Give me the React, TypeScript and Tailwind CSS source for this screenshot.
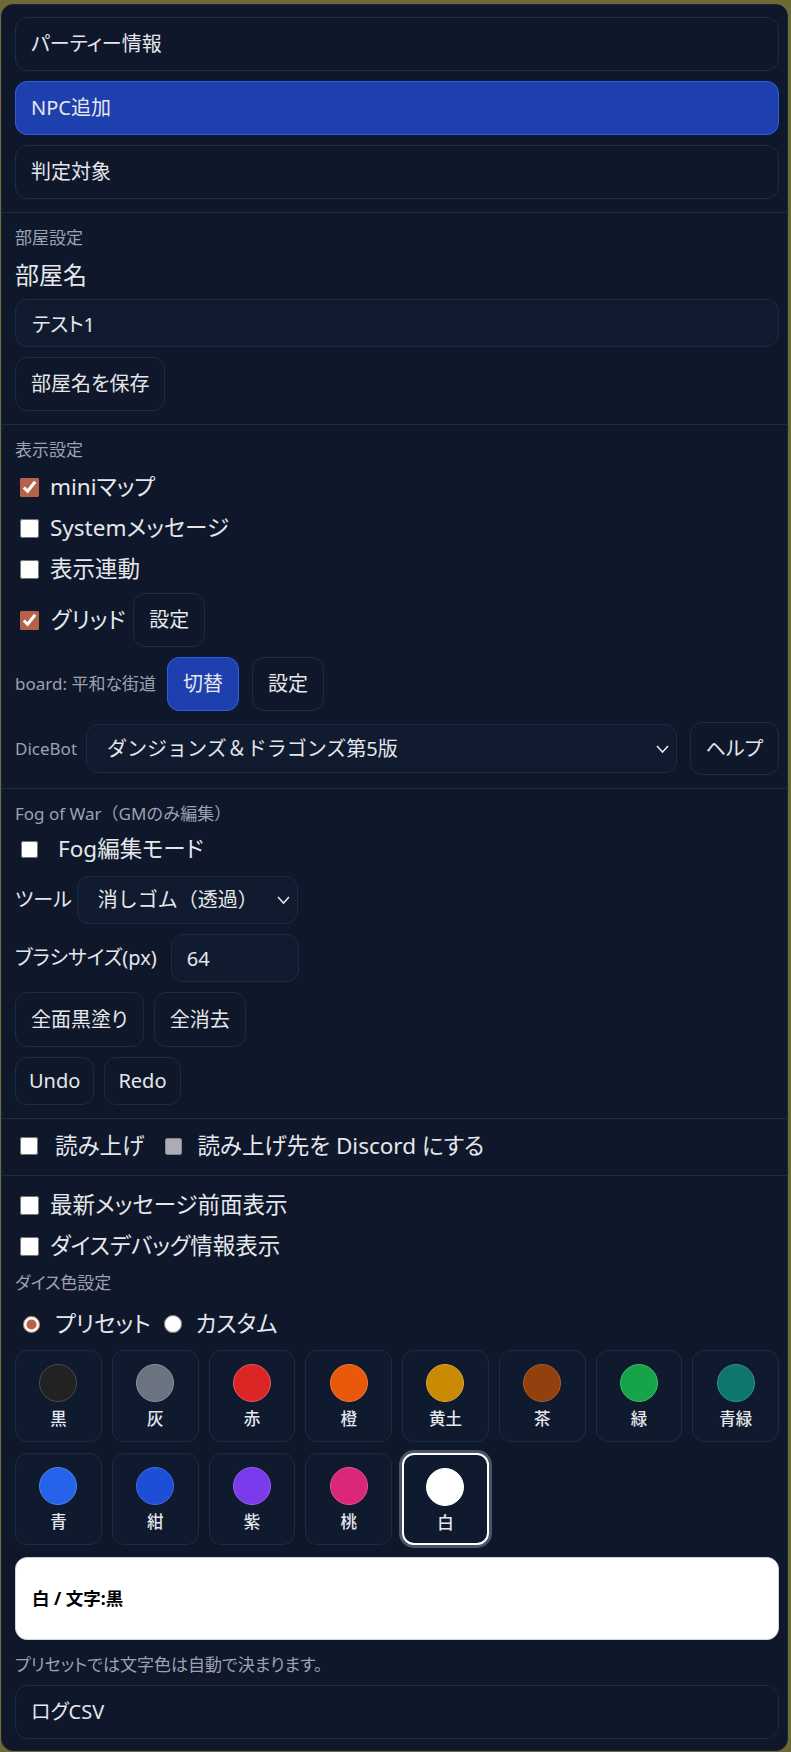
import React, { useState } from 'react';

const font = "font-['Noto_Sans','Noto_Sans_CJK_JP',sans-serif] [font-feature-settings:'palt']";
const border = 'border border-[#1e2b45]';
const btn = `rounded-xl ${border} bg-[#0f172a] px-[15px] text-[20px] text-[#e5e7eb] flex items-center shrink-0`;
const blueBtn = 'rounded-xl border border-[#2f5fe0] bg-[#1e40af] px-[15px] text-[20px] text-[#e5e7eb] flex items-center shrink-0';
const label = 'text-[17px] leading-[26px] text-[#9ca3af]';
const field = `rounded-xl ${border} bg-[#111b2f] text-[20px] text-[#e5e7eb] outline-none`;
const check = 'w-[19px] h-[19px] accent-[#b4634a] shrink-0';

const colors = [
  { name: '黒', c: '#222222', ring: '#4b4b4b' },
  { name: '灰', c: '#6b7280', ring: '#8b93a0' },
  { name: '赤', c: '#dc2626', ring: '#e85a5a' },
  { name: '橙', c: '#ea580c', ring: '#f07a3a' },
  { name: '黄土', c: '#ca8a04', ring: '#d9a23a' },
  { name: '茶', c: '#92400e', ring: '#aa5c2c' },
  { name: '緑', c: '#16a34a', ring: '#3ebb6a' },
  { name: '青緑', c: '#0f766e', ring: '#2f948b' },
  { name: '青', c: '#2563eb', ring: '#4d82f0' },
  { name: '紺', c: '#1d4ed8', ring: '#456ce0' },
  { name: '紫', c: '#7c3aed', ring: '#9660f0' },
  { name: '桃', c: '#db2777', ring: '#e45394' },
  { name: '白', c: '#ffffff', ring: '#ffffff' },
];

function Chevron() {
  return (
    <svg width="13" height="9" viewBox="0 0 13 9" className="absolute right-[8px] top-1/2 -translate-y-1/2 pointer-events-none">
      <path d="M1 1.5 L6.5 7.5 L12 1.5" fill="none" stroke="#e5e7eb" strokeWidth="1.6" />
    </svg>
  );
}

function CheckRow({ text, checked, textClass = 'ml-[11px]' }: { text: string; checked?: boolean; textClass?: string }) {
  return (
    <label className="flex items-center h-[34px]">
      <input type="checkbox" defaultChecked={checked} className={`${check} ml-[5px]`} />
      <span className={`${textClass} text-[22.5px] text-[#e5e7eb]`}>{text}</span>
    </label>
  );
}

export default function App() {
  const [selected, setSelected] = useState('白');
  const [mode, setMode] = useState('preset');

  return (
    <div className={`min-h-screen bg-[#6d6a37] pt-[4px] pl-[1px] pr-[3px] pb-[2px] ${font}`}>
      <div className="rounded-xl bg-[#0f172a] border border-[#1b2438] overflow-hidden">
        {/* メニュー */}
        <div className="pl-[13px] pr-[8px] pt-[12px] pb-[13px] flex flex-col gap-[10px]">
          <button className={`${btn} h-[54px] w-full`}>パーティー情報</button>
          <button className={`${blueBtn} h-[54px] w-full`}>NPC追加</button>
          <button className={`${btn} h-[54px] w-full`}>判定対象</button>
        </div>

        {/* 部屋設定 */}
        <div className="border-t border-[#1e2b45] pl-[13px] pr-[8px] pt-[12px] pb-[13px] flex flex-col">
          <div className={label}>部屋設定</div>
          <div className="mt-[6px] text-[24px] leading-[36px] text-[#e5e7eb]">部屋名</div>
          <input defaultValue="テスト1" className={`${field} mt-[6px] h-[48px] w-full px-[16px]`} />
          <div className="mt-[10px] flex">
            <button className={`${btn} h-[54px]`}>部屋名を保存</button>
          </div>
        </div>

        {/* 表示設定 */}
        <div className="border-t border-[#1e2b45] pl-[13px] pr-[8px] pt-[12px] pb-[13px] flex flex-col">
          <div className={label}>表示設定</div>
          <div className="mt-[7px]"><CheckRow text="miniマップ" checked /></div>
          <div className="mt-[7px]"><CheckRow text="Systemメッセージ" /></div>
          <div className="mt-[7px]"><CheckRow text="表示連動" /></div>
          <div className="mt-[7px] flex items-center">
            <input type="checkbox" defaultChecked className={`${check} ml-[5px]`} />
            <span className="ml-[12px] text-[22.5px] text-[#e5e7eb]">グリッド</span>
            <button className={`${btn} h-[54px] ml-[8px]`}>設定</button>
          </div>
          <div className="mt-[10px] flex items-center">
            <span className="text-[17px] text-[#9ca3af]">board: 平和な街道</span>
            <button className={`${blueBtn} h-[54px] ml-[11px]`}>切替</button>
            <button className={`${btn} h-[54px] ml-[13px]`}>設定</button>
          </div>
          <div className="mt-[11px] flex items-center">
            <span className="text-[17px] text-[#9ca3af]">DiceBot</span>
            <div className="relative flex-1 ml-[9px]">
              <select
                className={`${field} appearance-none h-[49px] w-full pl-[20px] pr-[30px] [font-feature-settings:normal]`}
                defaultValue="dnd5e"
              >
                <option value="dnd5e">ダンジョンズ＆ドラゴンズ第5版</option>
              </select>
              <Chevron />
            </div>
            <button className={`${btn} h-[53px] ml-[13px]`}>ヘルプ</button>
          </div>
        </div>

        {/* Fog of War */}
        <div className="border-t border-[#1e2b45] pl-[13px] pr-[8px] pt-[12px] pb-[13px] flex flex-col">
          <div className={`${label} [font-feature-settings:normal]`}>Fog of War（GMのみ編集）</div>
          <label className="mt-[5px] flex items-center h-[34px]">
            <input type="checkbox" className="w-[17px] h-[17px] ml-[6px] shrink-0" />
            <span className="ml-[20px] text-[22.5px] text-[#e5e7eb]">Fog編集モード</span>
          </label>
          <div className="mt-[10px] flex items-center">
            <span className="text-[20px] text-[#e5e7eb]">ツール</span>
            <div className="relative ml-[5px] w-[221px]">
              <select
                className={`${field} appearance-none h-[48px] w-full pl-[20px] pr-[28px] [font-feature-settings:normal]`}
                defaultValue="erase"
              >
                <option value="erase">消しゴム（透過）</option>
              </select>
              <Chevron />
            </div>
          </div>
          <div className="mt-[10px] flex items-center">
            <span className="text-[20px] text-[#e5e7eb]">ブラシサイズ(px)</span>
            <input defaultValue="64" className={`${field} ml-[14px] h-[48px] w-[128px] px-[15px]`} />
          </div>
          <div className="mt-[10px] flex gap-[10px]">
            <button className={`${btn} h-[55px]`}>全面黒塗り</button>
            <button className={`${btn} h-[55px]`}>全消去</button>
          </div>
          <div className="mt-[10px] flex gap-[10px]">
            <button className={`${btn} h-[48px] !px-[13px]`}>Undo</button>
            <button className={`${btn} h-[48px] !px-[13px]`}>Redo</button>
          </div>
        </div>

        {/* 読み上げ */}
        <div className="border-t border-[#1e2b45] pl-[13px] pr-[8px] pt-[10px] pb-[12px]">
          <div className="flex items-center h-[34px]">
            <input type="checkbox" className="w-[18px] h-[18px] ml-[5px] shrink-0" />
            <span className="ml-[17px] text-[22.5px] text-[#e5e7eb]">読み上げ</span>
            <input type="checkbox" disabled className="w-[17px] h-[17px] ml-[21px] shrink-0" />
            <span className="ml-[15px] text-[22.5px] text-[#e5e7eb]">読み上げ先を Discord にする</span>
          </div>
        </div>

        {/* その他 / ダイス色 */}
        <div className="border-t border-[#1e2b45] pl-[13px] pr-[8px] pt-[12px] pb-[11px] flex flex-col">
          <CheckRow text="最新メッセージ前面表示" />
          <div className="mt-[7px]"><CheckRow text="ダイスデバッグ情報表示" /></div>
          <div className={`${label} mt-[7px]`}>ダイス色設定</div>
          <div className="mt-[11px] flex items-center h-[34px]">
            <input
              type="radio"
              name="dicecolor"
              checked={mode === 'preset'}
              onChange={() => setMode('preset')}
              className="w-[17px] h-[17px] ml-[8px] accent-[#b4634a] shrink-0"
            />
            <span className="ml-[15px] text-[22.5px] text-[#e5e7eb]">プリセット</span>
            <input
              type="radio"
              name="dicecolor"
              checked={mode === 'custom'}
              onChange={() => setMode('custom')}
              className="w-[18px] h-[18px] ml-[13px] accent-[#b4634a] shrink-0"
            />
            <span className="ml-[14px] text-[22.5px] text-[#e5e7eb]">カスタム</span>
          </div>

          <div className="mt-[9px] grid grid-cols-8 gap-x-[10px] gap-y-[11px]">
            {colors.map((col) => {
              const active = selected === col.name;
              return (
                <button
                  key={col.name}
                  onClick={() => setSelected(col.name)}
                  className={`h-[92px] rounded-xl bg-[#101a2e] flex flex-col items-center pt-[13px] ${
                    active ? 'border-2 border-white ring-[3px] ring-[#4b5563]' : 'border border-[#1e2b45]'
                  }`}
                >
                  <span
                    className="w-[38px] h-[38px] rounded-full border shrink-0"
                    style={{ backgroundColor: col.c, borderColor: col.ring }}
                  />
                  <span className="mt-[5px] text-[16.5px] leading-[24px] font-medium text-[#e5e7eb]">{col.name}</span>
                </button>
              );
            })}
          </div>

          <div className="mt-[12px] h-[83px] rounded-xl bg-white border border-[#cbd5e1] flex items-center px-[16px]">
            <span className="text-[17.5px] font-bold text-black">白 / 文字:黒</span>
          </div>
          <div className={`${label} mt-[12px]`}>プリセットでは文字色は自動で決まります。</div>
          <button className={`${btn} h-[54px] w-full mt-[7px]`}>ログCSV</button>
        </div>
      </div>
    </div>
  );
}
